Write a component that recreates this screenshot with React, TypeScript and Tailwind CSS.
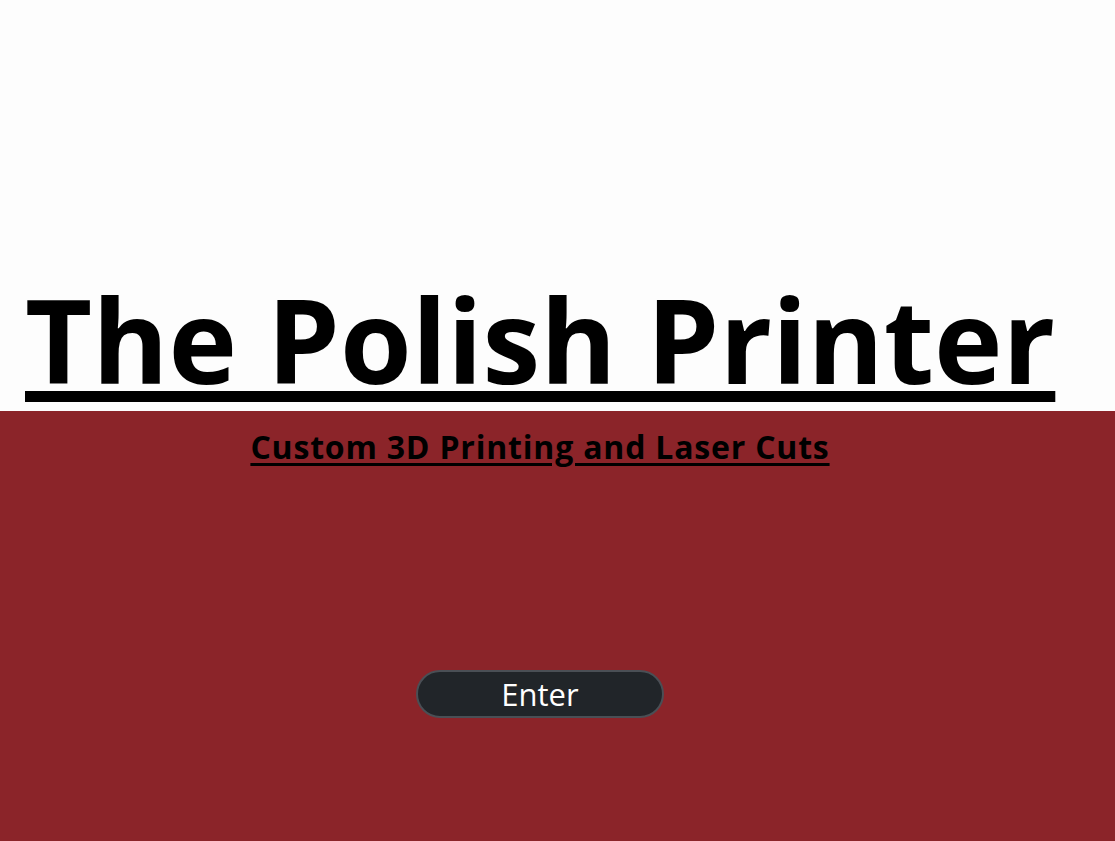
export default function App() {
  return (
    <div className="w-[1115px] h-[841px] flex flex-col bg-[#fdfdfd] font-['Open_Sans',sans-serif]">
      <div className="h-[411px] flex items-end pl-[25px] pb-[14px]">
        <h1 className="text-[116px] font-bold leading-none text-black underline decoration-[11px] underline-offset-[7px]">
          The Polish Printer
        </h1>
      </div>
      <div className="flex-1 bg-[#8b2429]">
        <div className="w-[1080px] flex flex-col items-center">
          <h2 className="mt-[20px] text-[32px] font-bold leading-none text-black underline decoration-[3px] underline-offset-[4px] tracking-[0.8px]">
            Custom 3D Printing and Laser Cuts
          </h2>
          <button className="mt-[207px] w-[248px] h-[48px] rounded-full bg-[#212529] border-2 border-[#4a4f55] text-white text-[31px] leading-none flex items-center justify-center">
            Enter
          </button>
        </div>
      </div>
    </div>
  );
}
